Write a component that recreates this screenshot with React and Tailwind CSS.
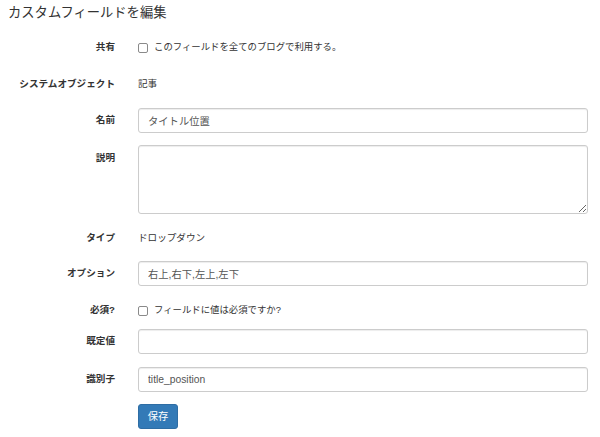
import React from 'react';

const font = { fontFamily: '"Liberation Sans", "Noto Sans CJK JP", sans-serif' };

function Row({ label, children, className = '', labelClass = '' }) {
  return (
    <div className={`flex ${className}`}>
      <div className={`w-[115px] shrink-0 text-right text-[9.6px] font-bold text-[#333] ${labelClass}`}>{label}</div>
      <div className="ml-[23px] flex-1">{children}</div>
    </div>
  );
}

function Checkbox({ text }) {
  return (
    <label className="flex items-center h-[25px] text-[9.4px] text-[#333]">
      <span className="w-[10px] h-[10px] border border-[#8a8a8a] rounded-[2px] bg-white mr-[6px]" />
      {text}
    </label>
  );
}

const inputCls = 'w-full h-[25px] border border-[#ccc] rounded-[3px] px-[9px] text-[10.3px] text-[#555] bg-white outline-none shadow-[inset_0_1px_1px_rgba(0,0,0,0.075)]';

export default function App() {
  return (
    <div className="w-[600px] h-[437px] bg-white pr-[12px] overflow-hidden" style={font}>
      <h4 className="pl-[8px] pt-[4px] h-[20px] leading-[18px] text-[13.3px] text-[#333]">カスタムフィールドを編集</h4>

      <Row label="共有" className="mt-[15px] items-center h-[25px]">
        <Checkbox text="このフィールドを全てのブログで利用する。" />
      </Row>

      <Row label="システムオブジェクト" className="mt-[12px] items-center h-[25px]">
        <div className="text-[9.6px] text-[#333]">記事</div>
      </Row>

      <Row label="名前" className="mt-[11px] items-center">
        <input className={inputCls} defaultValue="タイトル位置" />
      </Row>

      <Row label="説明" className="mt-[12px]" labelClass="pt-[6px]">
        <textarea className={`${inputCls} h-[69px] block py-[4px]`} />
      </Row>

      <Row label="タイプ" className="mt-[12px] items-center h-[25px]">
        <div className="text-[9.6px] text-[#333]">ドロップダウン</div>
      </Row>

      <Row label="オプション" className="mt-[10px] items-center">
        <input className={inputCls} defaultValue="右上,右下,左上,左下" />
      </Row>

      <Row label="必須?" className="mt-[12px] items-center h-[25px]">
        <Checkbox text="フィールドに値は必須ですか?" />
      </Row>

      <Row label="既定値" className="mt-[5px] items-center">
        <input className={inputCls} defaultValue="" />
      </Row>

      <Row label="識別子" className="mt-[12px] items-center">
        <input className={inputCls} defaultValue="title_position" />
      </Row>

      <Row label="" className="mt-[11px]">
        <button className="w-[40px] h-[25px] rounded-[3px] bg-[#337ab7] border border-[#2e6da4] text-white text-[10.3px]">保存</button>
      </Row>
    </div>
  );
}
